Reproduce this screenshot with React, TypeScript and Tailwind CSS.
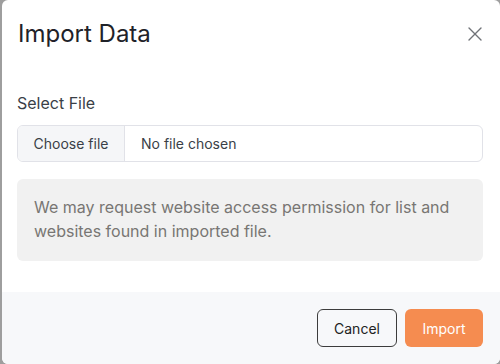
import { X } from "lucide-react";

export default function App() {
  return (
    <div className="w-[500px] h-[364px] bg-[#9e9e9e] flex" style={{ fontFamily: "Inter, 'Noto Sans', sans-serif" }}>
      <div className="flex-1 ml-[2px] flex flex-col bg-white rounded-md overflow-hidden">
        <div className="flex items-center justify-between pl-[16px] pr-[13px] pt-[19px]">
          <h1 className="text-[24px] leading-[30px] text-[#1f2229]">Import Data</h1>
          <button className="text-[#707378]">
            <X className="h-[24px] w-[24px]" strokeWidth={1.4} />
          </button>
        </div>

        <div className="flex-1 pl-[15px] pr-[17px] pt-[44px]">
          <label className="block text-[16px] leading-[20px] text-[#3a3f47] mb-3">Select File</label>
          <div className="flex h-[37px] border border-[#e1e2e8] rounded-md overflow-hidden text-[14px] text-[#3a3f47]">
            <div className="w-[107px] flex items-center justify-center bg-[#f5f6f8] border-r border-[#e1e2e8]">
              Choose file
            </div>
            <div className="flex items-center pl-[16px]">No file chosen</div>
          </div>

          <div className="mt-[17px] bg-[#f1f1f1] rounded-md pl-[17px] pr-4 pt-4 pb-[18px] text-[16px] leading-[24px] text-[#787673]">
            We may request website access permission for list and websites found in imported file.
          </div>
        </div>

        <div className="h-[72px] bg-[#f7f8fa] flex items-center justify-end gap-2 pr-[17px]">
          <button className="w-[80px] h-[38px] rounded-md border border-[#3c3c3c] text-[14px] text-[#222]">
            Cancel
          </button>
          <button className="w-[78px] h-[38px] rounded-md bg-[#f58c50] text-[14px] text-white">
            Import
          </button>
        </div>
      </div>
    </div>
  );
}
